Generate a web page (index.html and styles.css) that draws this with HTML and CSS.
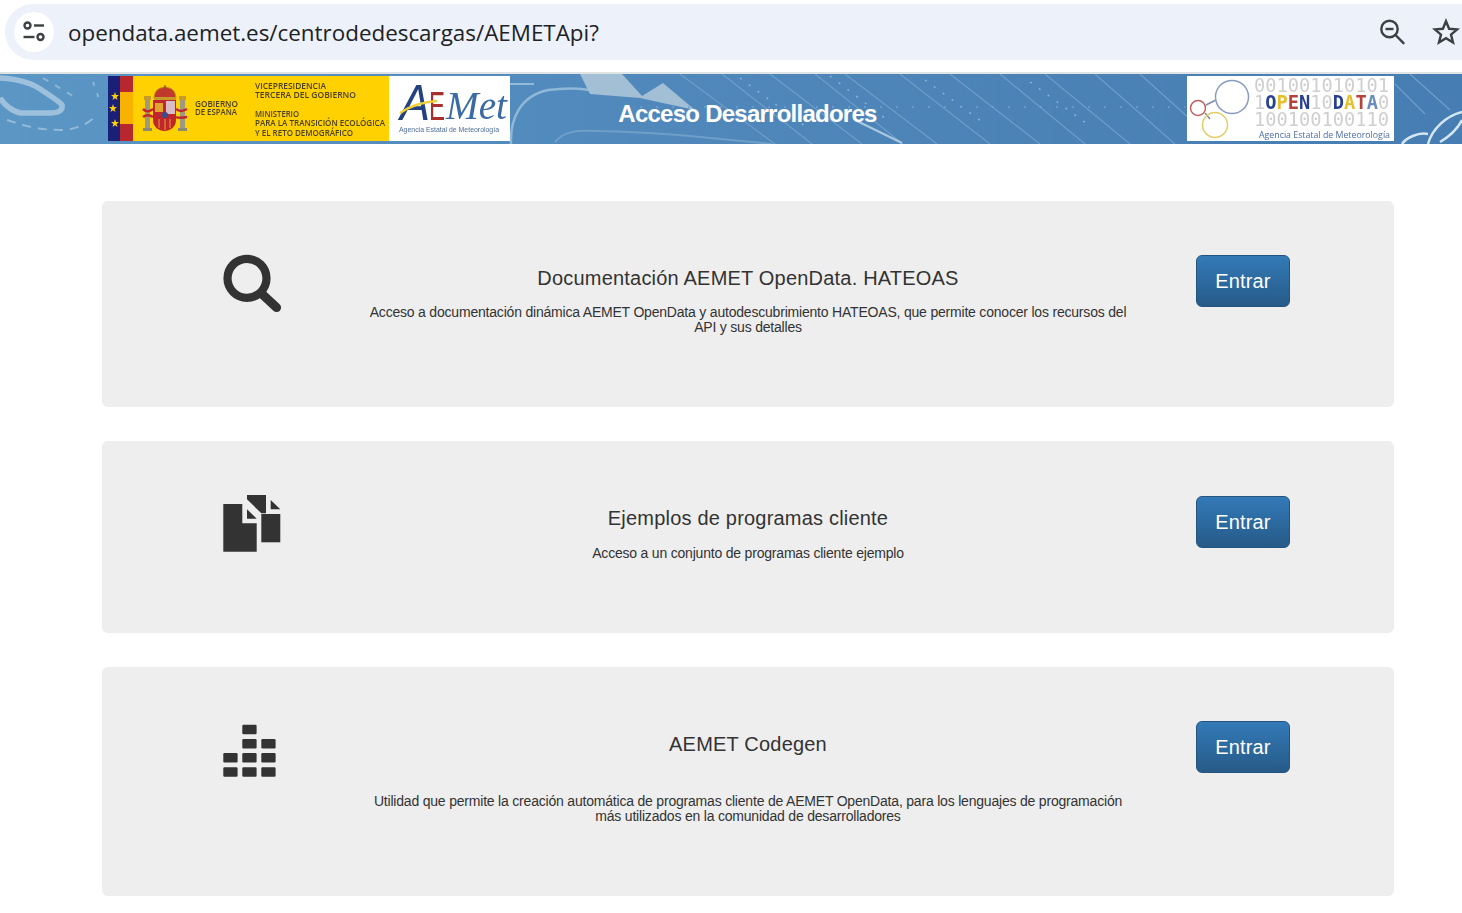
FILE: index.html
```html
<!DOCTYPE html>
<html lang="es">
<head>
<meta charset="utf-8">
<title>AEMET OpenData</title>
<link rel="stylesheet" href="styles.css">
</head>
<body>
<div class="toolbar">
  <div class="omnibox">
    <span class="tune">
      <svg width="24" height="24" viewBox="0 0 24 24" fill="none" stroke="#3c4043" stroke-width="2.400">
        <circle cx="5.500" cy="5.500" r="3"/><path d="M12 5.500h10"/>
        <circle cx="18.500" cy="17" r="3"/><path d="M1.500 17h11"/>
      </svg>
    </span>
    <span class="url">opendata.aemet.es/centrodedescargas/AEMETApi?</span>
    <svg class="zoom-icon" width="28" height="28" viewBox="0 0 28 28" fill="none" stroke="#3c4043" stroke-width="2.400">
      <circle cx="11.500" cy="11" r="8.200"/><path d="M7.500 11h8"/><path d="M17.500 17l8 8.200" stroke-linecap="round"/>
    </svg>
    <svg class="star-icon" width="28" height="28" viewBox="0 0 28 28" fill="none" stroke="#3c4043" stroke-width="2.400" stroke-linejoin="miter">
      <path d="M14 3.200l3.100 7.600 8.100.6-6.200 5.200 2 7.900-7-4.300-7 4.300 2-7.900-6.200-5.200 8.100-.6z"/>
    </svg>
  </div>
</div>

<header class="banner">
  <svg class="banner-art" width="1462" height="70" viewBox="0 0 1462 70" fill="none">
    <defs>
      <linearGradient id="sky" x1="0" y1="0" x2="1" y2="0">
        <stop offset="0" stop-color="#5b96c5"/>
        <stop offset=".45" stop-color="#5088bb"/>
        <stop offset="1" stop-color="#467db2"/>
      </linearGradient>
    </defs>
    <rect width="1462" height="70" fill="url(#sky)"/>
    <path d="M0 4C18 5 34 10 43 17C52 23 60 28 62 31C63 37 58 39 50 39H20C10 36 4 30 0 24" stroke="#9dc1dc" stroke-width="5.500"/>
    <path d="M7 46C25 52 40 56 60 56C75 56 90 50 97 40" stroke="#93bad8" stroke-width="2" stroke-dasharray="9 7"/>
    <path d="M43 4L73 22" stroke="#8cb6d6" stroke-width="2" stroke-dasharray="6 8"/>
    <path d="M93 8l8 22" stroke="#8cb6d6" stroke-width="2" stroke-dasharray="4 8"/>
    <path d="M511 70C510 45 520 22 548 16C570 13 585 14 600 18" stroke="#8fb8d8" stroke-width="2.500"/>
    <path d="M510 10h24" stroke="#93bad8" stroke-width="2"/>
    <path d="M580 0H622L642 22L663 9L695 36L640 24L590 20z" fill="#a3bfd6"/>
    <path d="M555 68C565 56 580 56 600 57C660 58 710 64 772 70" stroke="#6f9fc8" stroke-width="2"/>
    <path d="M680 0l95 70M722 0l90 70M770 0l92 70M815 0l88 70M845 0l92 70M900 0l90 70M950 0l90 70M1000 0l85 70M1045 0l85 70M1095 0l80 70M1140 0l50 45" stroke="#6f9fc9" stroke-width="1.100"/>
    <path d="M740 4l70 52M830 2l60 46M925 6l60 44M1030 8l60 44" stroke="#8ab4d6" stroke-width="1.500" stroke-dasharray="2 9"/>
    <path d="M855 46l47 23" stroke="#aac9e0" stroke-width="2"/>
    <path d="M640 33h545" stroke="#74a3cb" stroke-width="1.500" stroke-dasharray="2 14"/>
    <path d="M1395 10l30 30M1410 0l40 36" stroke="#6f9fc9" stroke-width="1.200"/>
    <path d="M1402 70C1406 64 1418 58 1428 60M1428 70C1432 55 1446 42 1462 38M1440 68C1450 62 1458 54 1462 46" stroke="#d5e6f2" stroke-width="2.500"/>
  </svg>

  <svg class="logo" width="281" height="65" viewBox="0 0 281 65">
    <rect width="281" height="65" fill="#ffd100"/>
    <rect width="12" height="65" fill="#1a2078"/>
    <rect x="12" width="13" height="65" fill="#b8262e"/>
    <rect x="12" y="16" width="13" height="32" fill="#f9b200"/>
    <g fill="#ffd100">
      <path d="M7 16l1 3 3 0-2.400 2 .9 3-2.500-1.800L4.500 24l.9-3L3 19l3 0z"/>
      <path d="M5 28l1 3 3 0-2.400 2 .9 3-2.500-1.800L2.500 36l.9-3L1 31l3 0z"/>
      <path d="M7 43l1 3 3 0-2.400 2 .9 3-2.500-1.800L4.500 51l.9-3L3 46l3 0z"/>
    </g>
    <path d="M57 9l1.500 2.500c5 .5 9 3 9.500 11H46c.5-8 4.500-10.500 9.500-11z" fill="#c0392b" stroke="#b98a1e"/>
    <rect x="46" y="21" width="22" height="3" fill="#c79a2a"/>
    <path d="M45 24h23v20c0 7-6 11-11.500 11S45 51 45 44z" fill="#c0272d"/>
    <rect x="58" y="25" width="9" height="13" fill="#d9bcc8"/>
    <rect x="47" y="27" width="8" height="9" fill="#e2a531"/>
    <circle cx="57" cy="39" r="3" fill="#36508f"/>
    <path d="M57 43v11M62 43v9M51 43v9" stroke="#e2a531"/>
    <rect x="37" y="24" width="5" height="28" fill="#9d9a7f"/>
    <rect x="72" y="24" width="5" height="28" fill="#9d9a7f"/>
    <rect x="36" y="20" width="7" height="4" fill="#c79a2a"/>
    <rect x="71" y="20" width="7" height="4" fill="#c79a2a"/>
    <rect x="35" y="52" width="9" height="3" fill="#8e8a6f"/>
    <rect x="70" y="52" width="9" height="3" fill="#8e8a6f"/>
    <path d="M35 33c4 4 7 2 10 0M35 41c4-3 7-2 10 0M68 33c4 3 7 2 11 0M68 41c4 2 7 0 11 0" stroke="#c0272d" stroke-width="2.500" fill="none"/>
    <g class="gov-text">
      <text x="87" y="31" textLength="43" lengthAdjust="spacingAndGlyphs">GOBIERNO</text>
      <text x="87" y="39" textLength="42" lengthAdjust="spacingAndGlyphs">DE ESPAÑA</text>
      <text x="147" y="13" textLength="71" lengthAdjust="spacingAndGlyphs">VICEPRESIDENCIA</text>
      <text x="147" y="22" textLength="101" lengthAdjust="spacingAndGlyphs">TERCERA DEL GOBIERNO</text>
      <text x="147" y="41" textLength="44" lengthAdjust="spacingAndGlyphs">MINISTERIO</text>
      <text x="147" y="50" textLength="130" lengthAdjust="spacingAndGlyphs">PARA LA TRANSICIÓN ECOLÓGICA</text>
      <text x="147" y="60" textLength="98" lengthAdjust="spacingAndGlyphs">Y EL RETO DEMOGRÁFICO</text>
    </g>
  </svg>

  <svg class="logo" width="121" height="65" viewBox="0 0 121 65">
    <rect width="121" height="65" fill="#fff"/>
    <text class="aemet-a" x="11" y="44" textLength="30" lengthAdjust="spacingAndGlyphs">A</text>
    <text class="aemet-e" x="40" y="44" textLength="16" lengthAdjust="spacingAndGlyphs">E</text>
    <text class="aemet-m" x="57" y="43" textLength="61" lengthAdjust="spacingAndGlyphs">Met</text>
    <path d="M11 37c10-7 24-11 37-12" stroke="#f2d23c" stroke-width="2.500" fill="none"/>
    <text class="aemet-sub" x="10" y="56" textLength="100" lengthAdjust="spacingAndGlyphs">Agencia Estatal de Meteorología</text>
  </svg>

  <h1 class="banner-title">Acceso Desarrolladores</h1>

  <svg class="logo" width="207" height="65" viewBox="0 0 207 65">
    <rect width="207" height="65" fill="#fff"/>
    <g fill="none" stroke-width="1.500">
      <path d="M19 29l10-5M18 37l5 6" stroke="#7a8bac"/>
      <circle cx="45" cy="21" r="16.500" stroke="#8a9cc2"/>
      <circle cx="11" cy="32" r="7.500" stroke="#c0605e"/>
      <circle cx="28" cy="49" r="12.500" stroke="#e2cc64"/>
    </g>
    <text class="digits" x="67" y="16">001001010101</text>
    <text class="digits" x="67" y="33">1<tspan class="d-blue">O</tspan><tspan class="d-yellow">P</tspan><tspan class="d-red">E</tspan><tspan class="d-blue">N</tspan>10<tspan class="d-blue">D</tspan><tspan class="d-yellow">A</tspan><tspan class="d-red">T</tspan><tspan class="d-lblue">A</tspan>0</text>
    <text class="digits" x="67" y="50">100100100110</text>
    <text class="open-sub" x="72" y="62" textLength="131" lengthAdjust="spacingAndGlyphs">Agencia Estatal de Meteorología</text>
  </svg>
</header>

<main class="cards">
  <section class="card">
    <div class="card-icon">
      <svg width="64" height="64" viewBox="0 0 64 64" fill="none" stroke="#333">
        <circle cx="27" cy="27.300" r="19.500" stroke-width="8.200"/>
        <path d="M42 43l14.500 13.500" stroke-width="9.200" stroke-linecap="round"/>
      </svg>
    </div>
    <div class="card-body">
      <h2 class="card-title">Documentación AEMET OpenData. HATEOAS</h2>
      <p class="card-text">Acceso a documentación dinámica AEMET OpenData y autodescubrimiento HATEOAS, que permite conocer los recursos del API y sus detalles</p>
    </div>
    <div class="card-action"><a class="btn" href="#">Entrar</a></div>
  </section>

  <section class="card card-single">
    <div class="card-icon">
      <svg width="64" height="64" viewBox="0 0 64 64" fill="#333">
        <path d="M3.300 13h19v19.300h14.400v28.400H3.300z"/>
        <path d="M27 18.300l9.700 9.400H27z"/>
        <path d="M27 4h19v18.300h-4.700L27 8.300z"/>
        <path d="M41.300 23h19v28.300h-19z"/>
        <path d="M50.700 9l9.600 9.300h-9.600z"/>
      </svg>
    </div>
    <div class="card-body">
      <h2 class="card-title">Ejemplos de programas cliente</h2>
      <p class="card-text">Acceso a un conjunto de programas cliente ejemplo</p>
    </div>
    <div class="card-action"><a class="btn" href="#">Entrar</a></div>
  </section>

  <section class="card">
    <div class="card-icon">
      <svg width="64" height="64" viewBox="0 0 64 64" fill="#333">
        <rect x="22.300" y="7.700" width="14.300" height="9.500" rx="1.200"/>
        <rect x="22.300" y="22" width="14.300" height="9.500" rx="1.200"/>
        <rect x="41.300" y="22" width="14.300" height="9.500" rx="1.200"/>
        <rect x="3.300" y="36" width="14.300" height="9.500" rx="1.200"/>
        <rect x="22.300" y="36" width="14.300" height="9.500" rx="1.200"/>
        <rect x="41.300" y="36" width="14.300" height="9.500" rx="1.200"/>
        <rect x="3.300" y="50.300" width="14.300" height="9.500" rx="1.200"/>
        <rect x="22.300" y="50.300" width="14.300" height="9.500" rx="1.200"/>
        <rect x="41.300" y="50.300" width="14.300" height="9.500" rx="1.200"/>
      </svg>
    </div>
    <div class="card-body">
      <h2 class="card-title card-title-spaced">AEMET Codegen</h2>
      <p class="card-text">Utilidad que permite la creación automática de programas cliente de AEMET OpenData, para los lenguajes de programación más utilizados en la comunidad de desarrolladores</p>
    </div>
    <div class="card-action"><a class="btn" href="#">Entrar</a></div>
  </section>
</main>
</body>
</html>
```

FILE: styles.css
```css
* { box-sizing: border-box; }

html, body {
  margin: 0;
  padding: 0;
  background: #fff;
  color: #333;
  font-family: "Liberation Sans", Arial, sans-serif;
}

.toolbar {
  height: 72px;
  padding: 4px 0 12px 5px;
  overflow: hidden;
}

.omnibox {
  display: flex;
  align-items: center;
  height: 56px;
  padding: 0 2px 0 9px;
  background: #edf2fa;
  border-radius: 28px 0 0 28px;
}

.tune {
  display: flex;
  align-items: center;
  justify-content: center;
  width: 40px;
  height: 40px;
  border-radius: 50%;
  background: #fff;
}

.url {
  flex: 1;
  margin: 0 0 0 14px;
  font-family: "Open Sans", sans-serif;
  font-size: 22.400px;
  color: #202124;
}

.zoom-icon { margin-right: 26px; }

.banner {
  position: relative;
  display: flex;
  align-items: flex-start;
  height: 72px;
  padding: 2px 68px 0 108px;
  border-top: 2px solid #dfe3e3;
}

.banner-art {
  position: absolute;
  left: 0;
  top: 0;
  filter: blur(.6px);
}

.logo {
  position: relative;
  display: block;
  flex: none;
  filter: blur(.35px);
}

.banner-title {
  position: relative;
  flex: none;
  width: 475px;
  margin: 0 auto 0 0;
  padding-top: 25px;
  font-size: 24px;
  font-weight: 700;
  line-height: 26px;
  letter-spacing: -.75px;
  text-align: center;
  color: #fff;
}

.gov-text text {
  font-family: "Open Sans", sans-serif;
  font-size: 8px;
  font-weight: 600;
  fill: #4a4226;
}

.aemet-a { font: italic 50px "Liberation Sans", sans-serif; fill: #24427f; }
.aemet-e { font: 40px "Liberation Sans", sans-serif; fill: #a8302c; }
.aemet-m { font: italic 40px "Liberation Serif", serif; fill: #3a6ba5; }
.aemet-sub { font: 8px "Liberation Sans", sans-serif; fill: #4e6f9c; }

.digits { font: 18.700px "DejaVu Sans Mono", monospace; fill: #cfcfcf; }
.d-blue { fill: #27408f; font-weight: 700; }
.d-yellow { fill: #e6bf2e; font-weight: 700; }
.d-red { fill: #b8423c; font-weight: 700; }
.d-lblue { fill: #6a8cbf; font-weight: 700; }
.open-sub { font: 9px "Open Sans", sans-serif; fill: #4c6ca8; }

.cards {
  display: flex;
  flex-direction: column;
  gap: 34px;
  padding: 57px 68px 17px 102px;
}

.card {
  display: grid;
  grid-template-columns: 200px 792px 200px;
  padding: 50px 50px 71.400px;
  background: #eee;
  border-radius: 6px;
}

.card-single { padding-bottom: 71.400px; }

.card-single .card-text { margin-top: 16.600px; }

.card-single .card-action { padding-top: 4.600px; }

.card-icon {
  display: flex;
  justify-content: center;
}

.card-icon svg { display: block; }

.card-body {
  padding: 16px 15px 0;
  text-align: center;
}

.card-title {
  margin: 0 0 16px;
  font-size: 20px;
  font-weight: 400;
  line-height: 22px;
  letter-spacing: .2px;
  color: #333;
}

.card-single .card-title { margin-bottom: 0; }

.card-title-spaced { margin-bottom: 39px; }

.card-text {
  margin: 0;
  font-size: 14px;
  line-height: 15.400px;
  letter-spacing: -.2px;
  color: #333;
}

.card-action {
  display: flex;
  justify-content: center;
  padding: 4px 2px 0 0;
}

.btn {
  display: block;
  width: 94px;
  height: 52px;
  font-size: 20px;
  line-height: 50px;
  letter-spacing: .15px;
  text-align: center;
  text-decoration: none;
  color: #fff;
  background: linear-gradient(#337ab7, #265a88);
  border: 1px solid #245580;
  border-radius: 6px;
}
```
